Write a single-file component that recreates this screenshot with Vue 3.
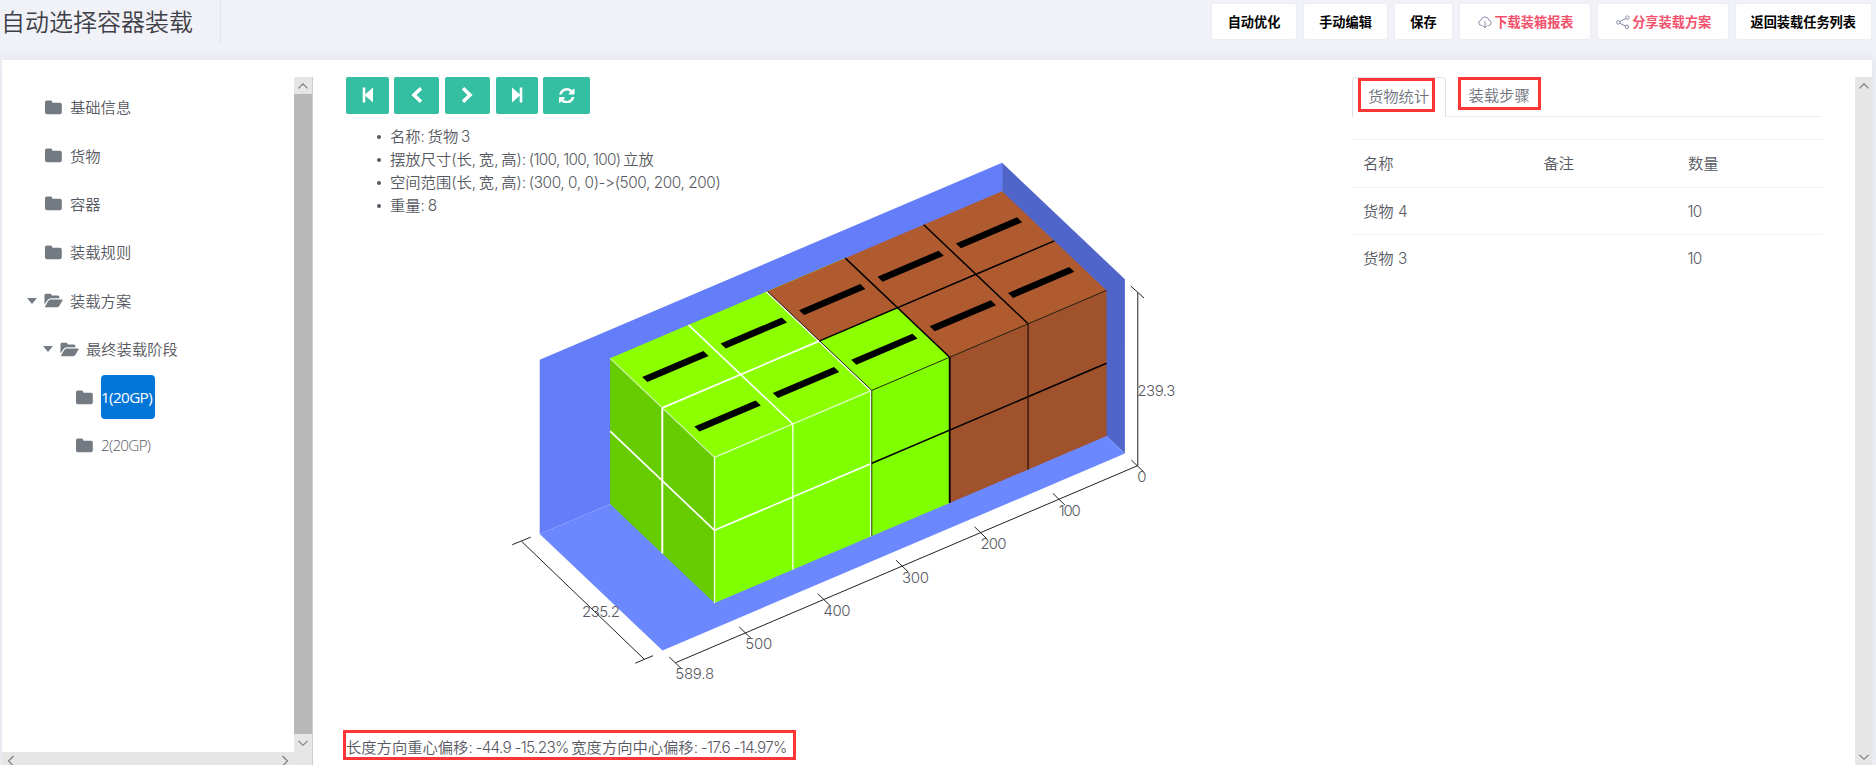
<script setup>
const actions = [
  { label: '自动优化', w: 84 },
  { label: '手动编辑', w: 83 },
  { label: '保存', w: 57 },
  { label: '下载装箱报表', w: 130, icon: 'cloud' },
  { label: '分享装载方案', w: 129.5, icon: 'share' },
  { label: '返回装载任务列表', w: 135.5 },
]

const tree = [
  { label: '基础信息', level: 0 },
  { label: '货物', level: 0 },
  { label: '容器', level: 0 },
  { label: '装载规则', level: 0 },
  { label: '装载方案', level: 0, open: true },
  { label: '最终装载阶段', level: 1, open: true },
  { label: '1(20GP)', level: 2, active: true },
  { label: '2(20GP)', level: 2 },
]

const stats = [
  { name: '货物', no: '4', count: '10' },
  { name: '货物', no: '3', count: '10' },
]

/* Oblique projection of container coordinates (length, width, height) */
const P = (l, w, h) => [1002.1 - 0.784 * l + 0.522 * w - 330, 337 + 0.334 * l + 0.4955 * w - 0.7283 * h - 60]
const pts = (...list) => list.map((c) => P(...c).map((v) => v.toFixed(1)).join(',')).join(' ')

const L = 589.8
const W = 235.2
const H = 239.3

const faces = [
  { c: '#647ef9', p: pts([0, 0, 0], [L, 0, 0], [L, 0, H], [0, 0, H]) },
  { c: '#5065c9', p: pts([0, 0, 0], [0, W, 0], [0, W, H], [0, 0, H]) },
  { c: '#6b88ff', p: pts([0, 0, 0], [L, 0, 0], [L, W, 0], [0, W, 0]) },
  { c: '#66cc00', p: pts([500, 0, 0], [500, 200, 0], [500, 200, 200], [500, 0, 200]) },
  { c: '#7fff00', p: pts([200, 200, 0], [500, 200, 0], [500, 200, 200], [200, 200, 200]) },
  { c: '#a0522d', p: pts([0, 200, 0], [200, 200, 0], [200, 200, 200], [0, 200, 200]) },
  { c: '#8cff00', p: pts([200, 0, 200], [500, 0, 200], [500, 200, 200], [200, 200, 200]) },
  { c: '#b05a30', p: pts([0, 0, 200], [300, 0, 200], [300, 100, 200], [200, 100, 200], [200, 200, 200], [0, 200, 200]) },
]

const edge = (a, b, c, w) => ({ p: pts(a, b), c, w })
const edges = [
  edge([100, 0, 200], [100, 200, 200], '#000', 1.5),
  edge([200, 0, 200], [200, 200, 200], '#000', 1.5),
  edge([300.6, 0, 200], [300.6, 200, 200], '#fff', 1.2),
  edge([299.4, 0, 200], [299.4, 200, 200], '#222', 1),
  edge([400, 0, 200], [400, 200, 200], '#fff', 1.6),
  edge([0, 100, 200], [300, 100, 200], '#000', 1.5),
  edge([300, 100, 200], [500, 100, 200], '#fff', 1.7),
  edge([0, 200, 200], [300, 200, 200], '#1a1a00', 0.9),
  edge([300, 200, 200], [500, 200, 200], '#e4ffc4', 1.3),
  edge([500, 0, 200], [500, 200, 200], '#d8f5b4', 1.1),
  edge([0, 200, 100], [300, 200, 100], '#000', 1.6),
  edge([300, 200, 100], [500, 200, 100], '#fff', 1.7),
  edge([500, 0, 100], [500, 200, 100], '#fff', 1.7),
  edge([500, 100, 0], [500, 100, 200], '#fff', 2),
  edge([500, 200, 0], [500, 200, 200], '#fff', 1.3),
  edge([400, 200, 0], [400, 200, 200], '#fff', 1.3),
  edge([300.8, 200, 0], [300.8, 200, 200], '#fff', 1.2),
  edge([299.4, 200, 0], [299.4, 200, 200], '#222', 0.9),
  edge([200, 200, 0], [200, 200, 200], '#000', 1.8),
  edge([100, 200, 0], [100, 200, 200], '#3c1c0c', 1.5),
]

const marks = []
for (let i = 0; i < 5; i++) {
  for (let j = 0; j < 2; j++) {
    const l = i * 100 + 50
    const w = j * 100 + 50
    marks.push(pts([l - 39, w - 5, 200], [l + 39, w - 5, 200], [l + 39, w + 5, 200], [l - 39, w + 5, 200]))
  }
}

const ticks = [
  { x: 807.6, y: 405.7, t: '0', n: 8 },
  { x: 729.2, y: 439.1, t: '100', n: 22 },
  { x: 650.8, y: 472.5, t: '200', n: 26 },
  { x: 572.4, y: 505.9, t: '300', n: 27 },
  { x: 494, y: 539.3, t: '400', n: 27 },
  { x: 415.6, y: 572.7, t: '500', n: 27 },
  { x: 345.6, y: 602.7, t: '589.8', n: 39 },
]
</script>

<template>
  <div class="page">
    <header class="top">
      <h1>自动选择容器装载</h1>
      <div class="actions">
        <button v-for="a in actions" :key="a.label" :class="{ link: a.icon }" :style="{ width: a.w + 'px' }">
          <svg v-if="a.icon === 'cloud'" width="14" height="14" viewBox="0 0 14 14">
            <path d="M4.4 10.5H3.6A2.7 2.7 0 0 1 2.8 5.2 4.2 4.2 0 0 1 11 5.2 2.7 2.7 0 0 1 10.6 10.5H9.6M7 6.2V12.6M5 10.8L7 12.8 9 10.8" />
          </svg>
          <svg v-if="a.icon === 'share'" width="14" height="14" viewBox="0 0 14 14">
            <circle cx="2.3" cy="7.4" r="1.7" /><circle cx="11.4" cy="2.6" r="1.7" /><circle cx="11" cy="11.8" r="1.7" />
            <path d="M3.8 6.6L9.9 3.4M3.8 8.3L9.5 11" />
          </svg>
          <span>{{ a.label }}</span>
        </button>
      </div>
    </header>

    <main class="card">
      <aside class="side">
        <div class="side-main">
          <ul class="tree">
            <li v-for="n in tree" :key="n.label" :class="'lv' + n.level">
              <span class="caret"><i v-if="n.open"></i></span>
              <svg v-if="n.open" class="folder" width="19" height="15" viewBox="0 0 19 15">
                <path d="M.5 11.6V2.3C.5 1.3 1.2.7 2.1.7H6.2C7.2.7 7.7 1.6 7.8 2.6H13.6C14.8 2.6 15.4 3.3 15.4 4.4V5.2H7.2C5.6 5.2 4.3 5.9 3.4 7.2Z" />
                <path d="M.7 14.2L4.2 8.1C4.9 6.9 5.7 6.4 7 6.4H18.2C18.8 6.4 18.8 7 18.5 7.5L15.6 12.6C14.9 13.8 14.1 14.2 12.9 14.2Z" />
              </svg>
              <svg v-else class="folder" width="19" height="15" viewBox="0 0 19 15">
                <path d="M1 2.4C1 1.4 1.8.6 2.8.6H6.6C7.6.6 8.3 1.3 8.4 2.7H15.8C17 2.7 17.8 3.5 17.8 4.6V12.2C17.8 13.4 17 14.2 15.8 14.2H3C1.8 14.2 1 13.4 1 12.2Z" />
              </svg>
              <span class="label" :class="{ active: n.active }">{{ n.label }}</span>
            </li>
          </ul>
          <div class="hbar">
            <svg width="8" height="12" viewBox="0 0 8 12"><path d="M6.5 1L1.5 6L6.5 11" /></svg>
            <svg width="8" height="12" viewBox="0 0 8 12"><path d="M1.5 1L6.5 6L1.5 11" /></svg>
          </div>
        </div>
        <div class="vbar">
          <div class="arrow"><svg width="12" height="8" viewBox="0 0 12 8"><path d="M1.5 6.3L6 1.8L10.5 6.3" /></svg></div>
          <div class="thumb"></div>
          <div class="arrow"><svg width="12" height="8" viewBox="0 0 12 8"><path d="M1.5 1.8L6 6.3L10.5 1.8" /></svg></div>
          <div class="corner"></div>
        </div>
      </aside>

      <section class="view">
        <svg class="scene" width="1000" height="705" viewBox="0 0 1000 705">
          <polygon v-for="(f, i) in faces" :key="'f' + i" :points="f.p" :fill="f.c" />
          <polyline v-for="(e, i) in edges" :key="'e' + i" :points="e.p" :stroke="e.c" :stroke-width="e.w" fill="none" />
          <polygon v-for="(m, i) in marks" :key="'m' + i" :points="m" fill="#000" />
          <g class="axis">
            <path d="M191.5 481.3L314 599M182.3 484.7L200.7 477.2M305.3 603.2L323 595.7" />
            <path d="M807.8 232.5V405.7M800.7 226L814 238M807.6 405.7L345.6 602.7" />
            <path v-for="t in ticks" :key="t.t" :d="`M${t.x - 6.3} ${t.y - 5.7}l12 11.6`" />
          </g>
          <text v-for="t in ticks" :key="'t' + t.t" :x="t.x - 0.4" :y="t.y + 16.7" :textLength="t.n">{{ t.t }}</text>
          <text x="252" y="557" textLength="38">235.2</text>
          <text x="807.3" y="336" textLength="38">239.3</text>
        </svg>

        <div class="nav">
          <button class="w43"><svg width="16" height="18" viewBox="0 0 16 18"><path d="M2.7 1.5H5.3V8.3L13 1.4V16.6L5.3 9.7V16.5H2.7Z" /></svg></button>
          <button class="w45"><svg width="16" height="18" viewBox="0 0 16 18"><path class="chev" d="M12 2.3L5 9L12 15.7" /></svg></button>
          <button class="w45 next"><svg width="16" height="18" viewBox="0 0 16 18"><path class="chev" d="M4 2.3L11 9L4 15.7" /></svg></button>
          <button class="w42 next"><svg width="16" height="18" viewBox="0 0 16 18"><path d="M13.3 1.5H10.7V8.3L3 1.4V16.6L10.7 9.7V16.5H13.3Z" /></svg></button>
          <button class="w47 next">
            <svg width="15.5" height="15.5" viewBox="0 0 1536 1536">
              <path d="M1511 928q0 5-1 7-64 268-268 434.500T764 1536q-146 0-282.500-55T238 1324l-129 129q-19 19-45 19t-45-19-19-45V960q0-26 19-45t45-19h448q26 0 45 19t19 45-19 45l-137 137q71 66 161 102t187 36q134 0 250-65t186-179q11-17 53-117 8-23 30-23h192q13 0 22.500 9.500t9.500 22.500zm25-800v448q0 26-19 45t-45 19h-448q-26 0-45-19t-19-45 19-45l138-138Q969 256 768 256q-134 0-250 65T332 500q-11 17-53 117-8 23-30 23H50q-13 0-22.500-9.500T18 608v-7q65-268 270-434.500T768 0q146 0 284 55.500T1297 212l130-129q19-19 45-19t45 19 19 45z" />
            </svg>
          </button>
        </div>

        <ul class="info">
          <li>名称: 货物 <b>3</b></li>
          <li>摆放尺寸(长, 宽, 高): <b class="s1">(100, 100, 100)</b> 立放</li>
          <li>空间范围(长, 宽, 高): <b class="s2">(300, 0, 0)-&gt;(500, 200, 200)</b></li>
          <li>重量: <b>8</b></li>
        </ul>

        <p class="offset">长度方向重心偏移: <b>-44.9 -15.23%</b> 宽度方向中心偏移: <b>-17.6 -14.97%</b></p>
      </section>

      <section class="panel">
        <div class="tabs">
          <div class="tab on"><span>货物统计</span></div>
          <div class="tab"><span>装载步骤</span></div>
        </div>
        <div class="grid head"><span>名称</span><span>备注</span><span>数量</span></div>
        <div v-for="s in stats" :key="s.no" class="grid"><span>{{ s.name }} <b>{{ s.no }}</b></span><span></span><span class="num">{{ s.count }}</span></div>
      </section>

      <div class="vbar outer">
        <div class="arrow"><svg width="12" height="8" viewBox="0 0 12 8"><path d="M1.5 6.3L6 1.8L10.5 6.3" /></svg></div>
        <div class="arrow"><svg width="12" height="8" viewBox="0 0 12 8"><path d="M1.5 1.8L6 6.3L10.5 1.8" /></svg></div>
      </div>
    </main>
  </div>
</template>

<style>
html, body { margin: 0; overflow: hidden; background: #f1f2f8; }
</style>

<style scoped>
* { box-sizing: border-box; }
.page {
  width: 1876px; height: 765px; overflow: hidden;
  display: flex; flex-direction: column;
  background: #f1f2f8; color: #575962;
  font: 350 15.3px/23px Inter, "Noto Sans CJK SC", sans-serif;
  font-variant-ligatures: none; font-feature-settings: "calt" 0;
}
b { font-weight: 300; word-spacing: 0; }
ul { list-style: none; margin: 0; padding: 0; }
button { border: 0; padding: 0; margin: 0; }
.top { height: 60px; flex: none; display: flex; justify-content: space-between; }
h1 {
  margin: 0; width: 221px; height: 44px; padding-left: 1px;
  border-right: 1px solid #e2e4ea;
  font: 350 24px/41px "Noto Sans CJK SC", sans-serif; color: #3f4047; white-space: nowrap;
}
.actions { display: flex; gap: 8px; padding: 4px 5px 0 0; }
.actions button {
  height: 35px; background: #fff; border-radius: 2px; box-shadow: 0 0 2px #dfe1ea;
  display: flex; align-items: center; justify-content: center; gap: 2px;
  font: 700 13.2px/20px "Noto Sans CJK SC", sans-serif; color: #000; white-space: nowrap;
}
.actions .link { color: #f4516c; padding-left: 2px; }
.actions svg { fill: none; stroke: #868aa8; stroke-width: 1; }
.card {
  height: 705px; margin: 0 4px 0 2px; background: #fff; display: flex;
  box-shadow: 0 0 12px rgba(69, 65, 78, 0.1);
}
.side { width: 311px; padding-top: 17px; display: flex; flex: none; }
.side-main { flex: 1; display: flex; flex-direction: column; justify-content: space-between; }
.tree { padding-top: 6px; font-family: "Open Sans", "Noto Sans CJK SC", sans-serif; }
.tree li { height: 48.4px; display: flex; align-items: center; padding-left: 25px; }
.tree .lv1 { padding-left: 41px; }
.tree .lv2 { padding-left: 56px; }
.caret { width: 17px; display: flex; }
.caret i { border: 5px solid transparent; border-top: 6px solid #747a82; border-bottom: 0; }
.folder { fill: #747a82; flex: none; margin-right: 7px; }
.label { height: 44px; line-height: 44px; white-space: nowrap; }
.lv2 .label { position: relative; top: -1px; letter-spacing: -0.75px; font-weight: 300; }
.lv2 .label.active { background: #0275d8; color: #fff; font-weight: 400; border-radius: 4px; width: 54px; letter-spacing: -0.65px; }
.hbar {
  height: 13px; background: #e6e6e6; display: flex; justify-content: space-between;
  padding: 3px 5px 0 5px; overflow: hidden;
}
.hbar svg { flex: none; }
.hbar svg, .arrow svg { fill: none; stroke: #777; stroke-width: 1.1; }
.vbar { width: 19px; border-right: 1px solid #ccc; background: #e6e6e6; display: flex; flex-direction: column; }
.arrow { height: 17px; flex: none; display: flex; align-items: center; justify-content: center; }
.thumb { height: 640px; background: #b8b8b8; }
.vbar .thumb + .arrow { height: 18px; }
.corner { flex: 1; }
.view { position: relative; width: 1037px; flex: none; padding: 17px 0 0 33px; }
.scene { position: absolute; left: 17px; top: 0; }
.scene text { font-size: 15px; fill: #575962; font-weight: 300; }
.axis { fill: none; stroke: #222; stroke-width: 1; }
.nav { position: relative; display: flex; gap: 5px; height: 36.6px; }
.nav button { background: #34bfa3; border-radius: 2px; display: flex; align-items: center; justify-content: center; }
.nav .next { margin-left: 0.8px; }
.nav svg { fill: #fff; }
.nav .chev { fill: none; stroke: #fff; stroke-width: 3.6; }
.w43 { width: 43px; } .w45 { width: 45px; } .w42 { width: 42px; } .w47 { width: 47px; }
.info { position: relative; margin-top: 11px; padding-left: 44px; }
.info li { position: relative; white-space: nowrap; word-spacing: -1.6px; }
.info li::before {
  content: ""; position: absolute; left: -13px; top: 10px; width: 4px; height: 4px;
  border-radius: 50%; background: #575962;
}
.s1 { letter-spacing: -0.68px; }
.s2 { letter-spacing: -0.4px; }
.offset {
  position: absolute; left: 30px; top: 670px; width: 453px; height: 30px; margin: 0;
  border: 3px solid #fd3536; line-height: 30px; white-space: nowrap; word-spacing: -1.6px;
}
.offset b { letter-spacing: -0.7px; word-spacing: 0; }
.panel { width: 472px; margin-left: 2px; padding: 17px 2px 0 0; flex: none; }
.tabs { height: 40px; display: flex; border-bottom: 1px solid #ebedf2; align-items: flex-start; }
.tab { height: 40px; padding: 0 0 0 12px; }
.tab.on { width: 94px; background: #fff; border: 1px solid #dee0e5; border-bottom: 0; border-radius: 4px 4px 0 0; padding: 0 0 0 5px; }
.tab span {
  display: block; width: 83px; height: 33px; border: 3px solid #fd3536;
  line-height: 32px; padding-left: 7.5px; color: #6f727d; white-space: nowrap;
}
.tab.on span { width: 77px; height: 34px; padding-left: 7px; line-height: 31px; }
.grid {
  height: 47px; border-top: 1px solid #f1f2f5; display: grid; align-items: center;
  grid-template-columns: 180.5px 144.5px 1fr; padding-left: 11px;
}
.grid.head { margin-top: 22px; height: 48px; }
.num { font-weight: 300; letter-spacing: -0.6px; position: relative; left: -0.6px; }
.vbar.outer { width: 17px; border: 0; margin: 17px 0 0 auto; justify-content: space-between; }
</style>
